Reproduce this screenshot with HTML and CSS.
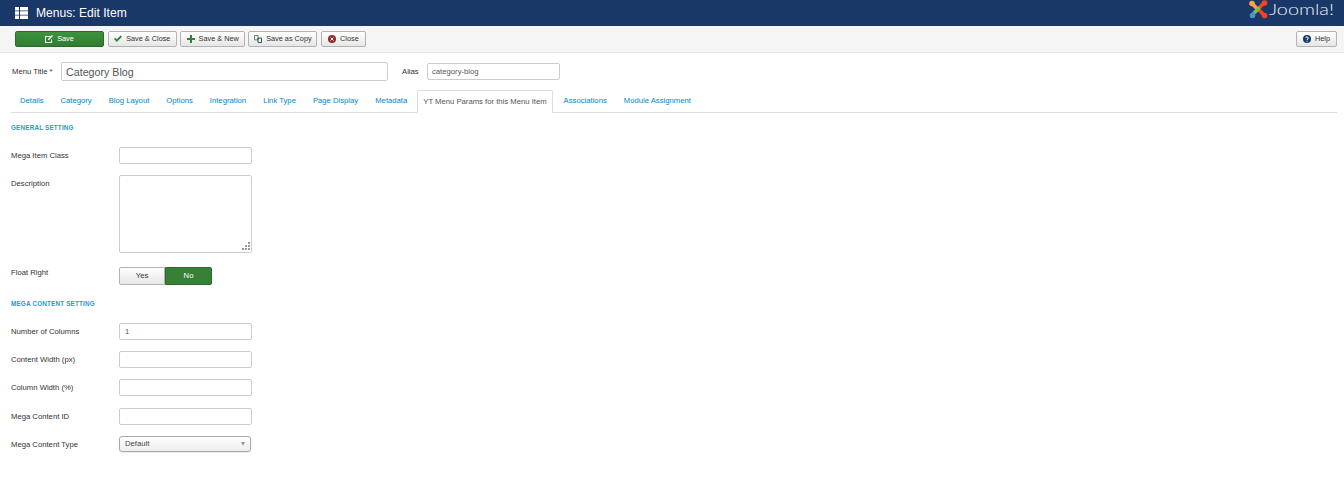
FILE: index.html
```html
<!DOCTYPE html>
<html lang="en">
<head>
    <meta charset="UTF-8">
    <title>Menus: Edit Item</title>
    <link rel="stylesheet" href="styles.css">
</head>
<body>
    <header class="topbar">
        <svg class="menu-icon" width="13" height="12" viewBox="0 0 13 12">
            <path fill="#fff" d="M0 0h4v3.400H0zM5 0h8v3.400H5zM0 4.300h4v3.400H0zM5 4.300h8v3.400H5zM0 8.600h4V12H0zM5 8.600h8V12H5z"/>
        </svg>
        <h1 class="page-title">Menus: Edit Item</h1>
        <div class="logo">
            <svg width="19" height="19" viewBox="0 0 19 19">
                <g fill="none" stroke-width="3.600" stroke-linecap="round">
                    <path stroke="#5091cd" d="M4 14l5-5"/>
                    <path stroke="#f44321" d="M15 15l-5-5"/>
                    <path stroke="#f44321" d="M15 3l-5 5"/>
                    <path stroke="#f9a541" d="M3.500 4l4 4"/>
                    <path stroke="#7ac143" d="M6.500 11.500l3-3"/>
                </g>
                <circle cx="3" cy="3.500" r="2.800" fill="#f9a541"/>
                <circle cx="15.500" cy="3" r="2.800" fill="#f44321"/>
                <circle cx="3.500" cy="15.500" r="2.800" fill="#5091cd"/>
                <circle cx="15.500" cy="15.500" r="2.800" fill="#f44321"/>
            </svg>
            <svg class="logo-word" width="67" height="20" viewBox="0 0 67 20">
                <text x="1" y="15" textLength="65" lengthAdjust="spacingAndGlyphs">Joomla!</text>
            </svg>
        </div>
    </header>

    <div class="toolbar">
        <button class="btn btn-save">
            <svg width="8" height="8" viewBox="0 0 8 8"><path fill="#fff" d="M0 1h6L5 2H1v5h5V5l1-1v4H0z"/><path fill="#fff" d="M7 0l1 1-4 4H3V4z"/></svg>
            Save
        </button>
        <button class="btn btn-close-save">
            <svg width="8" height="8" viewBox="0 0 9 8"><path fill="#378137" d="M0 4l1.500-1.500L3.200 4.200 7.500 0 9 1.500 3.200 7.500z"/></svg>
            Save &amp; Close
        </button>
        <button class="btn">
            <svg width="8" height="8" viewBox="0 0 8 8"><path fill="#378137" d="M3 0h2v3h3v2H5v3H3V5H0V3h3z"/></svg>
            Save &amp; New
        </button>
        <button class="btn btn-copy">
            <svg width="8" height="8" viewBox="0 0 9 9"><path fill="none" stroke="#378137" d="M.5.5h4v5h-4z"/><path fill="none" stroke="#1a3867" d="M4.500 3.500h4v5h-4z"/></svg>
            Save as Copy
        </button>
        <button class="btn btn-close">
            <svg width="8" height="8" viewBox="0 0 8 8"><circle cx="4" cy="4" r="4" fill="#942a25"/><path stroke="#fff" d="M2.500 2.500l3 3M5.500 2.500l-3 3"/></svg>
            Close
        </button>
        <button class="btn btn-help">
            <svg width="8" height="8" viewBox="0 0 8 8"><circle cx="4" cy="4" r="4" fill="#1a3867"/><path fill="none" stroke="#fff" d="M2.700 3c0-1.500 2.600-1.500 2.600 0C5.300 4 4 4 4 5"/><path stroke="#fff" d="M4 5.700v1"/></svg>
            Help
        </button>
    </div>

    <main class="content">
        <div class="title-row">
            <label class="title-label">Menu Title *</label>
            <input class="title-input" type="text" value="Category Blog">
            <label class="alias-label">Alias</label>
            <input class="alias-input" type="text" value="category-blog">
        </div>

        <ul class="tabs">
            <li><a>Details</a></li>
            <li><a>Category</a></li>
            <li><a>Blog Layout</a></li>
            <li><a>Options</a></li>
            <li><a>Integration</a></li>
            <li><a>Link Type</a></li>
            <li><a>Page Display</a></li>
            <li><a>Metadata</a></li>
            <li class="active"><a>YT Menu Params for this Menu Item</a></li>
            <li><a>Associations</a></li>
            <li><a>Module Assignment</a></li>
        </ul>

        <h4 class="section-title">General Setting</h4>
        <div class="field">
            <label>Mega Item Class</label>
            <input class="text-input" type="text">
        </div>
        <div class="field">
            <label>Description</label>
            <div class="area-wrap">
                <textarea class="text-area"></textarea>
                <svg class="grip" width="9" height="9" viewBox="0 0 9 9">
                    <path fill="#999" d="M7 0h2v2H7zM4 3h2v2H4zM7 3h2v2H7zM1 6h2v2H1zM4 6h2v2H4zM7 6h2v2H7z"/>
                </svg>
            </div>
        </div>
        <div class="field field-switch">
            <label>Float Right</label>
            <div class="switch">
                <span class="switch-yes">Yes</span>
                <span class="switch-no">No</span>
            </div>
        </div>

        <h4 class="section-title section-two">Mega Content Setting</h4>
        <div class="field">
            <label>Number of Columns</label>
            <input class="text-input" type="text" value="1">
        </div>
        <div class="field">
            <label>Content Width (px)</label>
            <input class="text-input" type="text">
        </div>
        <div class="field">
            <label>Column Width (%)</label>
            <input class="text-input" type="text">
        </div>
        <div class="field">
            <label>Mega Content ID</label>
            <input class="text-input" type="text">
        </div>
        <div class="field">
            <label>Mega Content Type</label>
            <div class="select">Default<span class="caret"></span></div>
        </div>
    </main>
</body>
</html>
```

FILE: styles.css
```css
* {
    box-sizing: border-box;
}

body {
    margin: 0;
    font-family: "Liberation Sans", Arial, sans-serif;
    font-size: 7.700px;
    color: #333;
    background: #fff;
}

.topbar {
    height: 26px;
    background: #1a3867;
    display: flex;
    align-items: center;
    padding: 0 9px 0 15px;
}

.page-title {
    margin: 0 0 0 8px;
    font-size: 12.100px;
    font-weight: normal;
    color: #fff;
}

.logo {
    margin-left: auto;
    display: flex;
    align-items: flex-start;
    height: 26px;
}

.logo-word text {
    font-family: Lato, "Open Sans", sans-serif;
    font-weight: 300;
    font-size: 15px;
    fill: #e8ecf2;
}

.toolbar {
    height: 27px;
    background: #f5f5f5;
    border-bottom: 1px solid #e3e3e3;
    display: flex;
    align-items: flex-start;
    gap: 3.200px;
    padding: 5px 7px 0 15px;
}

.btn {
    height: 15.500px;
    padding: 0 5.500px;
    display: flex;
    align-items: center;
    gap: 4px;
    font-family: inherit;
    font-size: 7.300px;
    color: #333;
    background: linear-gradient(#fff, #e6e6e6);
    border: 1px solid #b3b3b3;
    border-radius: 2px;
}

.btn-save {
    width: 89px;
    margin-right: .5px;
    justify-content: center;
    color: #fff;
    background: linear-gradient(#3d943d, #2f7d32);
    border-color: #2a6b2c;
}

.btn-close-save {
    padding: 0 5.500px;
}

.btn-copy {
    padding: 0 4.750px;
}

.btn-close {
    padding: 0 6.500px;
}

.btn-help {
    margin-left: auto;
    padding: 0 6px;
}

.content {
    padding: 9px 7px 0 11px;
}

.title-row {
    display: flex;
    align-items: center;
    height: 19px;
}

.title-label {
    width: 50px;
    padding-left: 1px;
}

.title-input {
    width: 327px;
    height: 19px;
    padding: 0 4px;
    font-family: inherit;
    font-size: 10.700px;
    color: #555;
    border: 1px solid #ccc;
    border-radius: 2px;
}

.alias-label {
    margin-left: 14px;
    width: 25px;
}

.alias-input {
    width: 133px;
    height: 17px;
    padding: 0 4px;
    font-family: inherit;
    font-size: 7.700px;
    color: #555;
    border: 1px solid #ccc;
    border-radius: 2px;
}

.tabs {
    list-style: none;
    margin: 9px 0 0;
    padding: 0 0 0 .5px;
    height: 23px;
    display: flex;
    border-bottom: 1px solid #ddd;
}

.tabs li {
    height: 23px;
    padding: 0 8.500px;
    line-height: 22px;
    color: #08c;
}

.tabs li.active {
    margin: 0 2.500px 0 1.500px;
    padding: 0 5px;
    color: #555;
    background: #fff;
    border: 1px solid #ddd;
    border-bottom-color: #fff;
    border-radius: 2px 2px 0 0;
}

.section-title {
    margin: 10px 0 0;
    font-size: 6.300px;
    line-height: 9px;
    font-weight: bold;
    text-transform: uppercase;
    letter-spacing: .2px;
    color: #15a0cc;
}

.section-two {
    margin-top: 14px;
}

.field {
    display: flex;
    align-items: flex-start;
    margin-top: 11.300px;
}

.field-switch {
    margin-top: 10.500px;
}

.section-title + .field {
    margin-top: 15px;
}

.section-two + .field {
    margin-top: 15px;
}

.field label {
    width: 108px;
    line-height: 17px;
}

.text-input {
    width: 133px;
    height: 17px;
    padding: 0 5px;
    font-family: inherit;
    font-size: 7.700px;
    color: #555;
    border: 1px solid #ccc;
    border-radius: 2px;
}

.area-wrap {
    position: relative;
    width: 133px;
    height: 78px;
}

.text-area {
    display: block;
    width: 133px;
    height: 78px;
    resize: none;
    border: 1px solid #ccc;
    border-radius: 2px;
}

.grip {
    position: absolute;
    right: 2px;
    bottom: 2px;
}

.switch {
    display: flex;
    width: 93px;
    height: 18px;
    margin-top: 3px;
    line-height: 16px;
    text-align: center;
}

.switch-yes {
    width: 46px;
    color: #333;
    background: linear-gradient(#fff, #e6e6e6);
    border: 1px solid #b3b3b3;
    border-radius: 2px 0 0 2px;
}

.switch-no {
    width: 47px;
    color: #fff;
    background: #378137;
    border: 1px solid #2a6b2c;
    border-radius: 0 2px 2px 0;
}

.select {
    position: relative;
    width: 132px;
    height: 16px;
    padding-left: 5px;
    line-height: 14px;
    color: #444;
    background: linear-gradient(#fff, #eee);
    border: 1px solid #aaa;
    border-radius: 3px;
    box-shadow: 0 1px 2px rgba(0, 0, 0, .1);
}

.caret {
    position: absolute;
    top: 5px;
    right: 5px;
    border-top: 4px solid #999;
    border-left: 2.500px solid transparent;
    border-right: 2.500px solid transparent;
}
```
